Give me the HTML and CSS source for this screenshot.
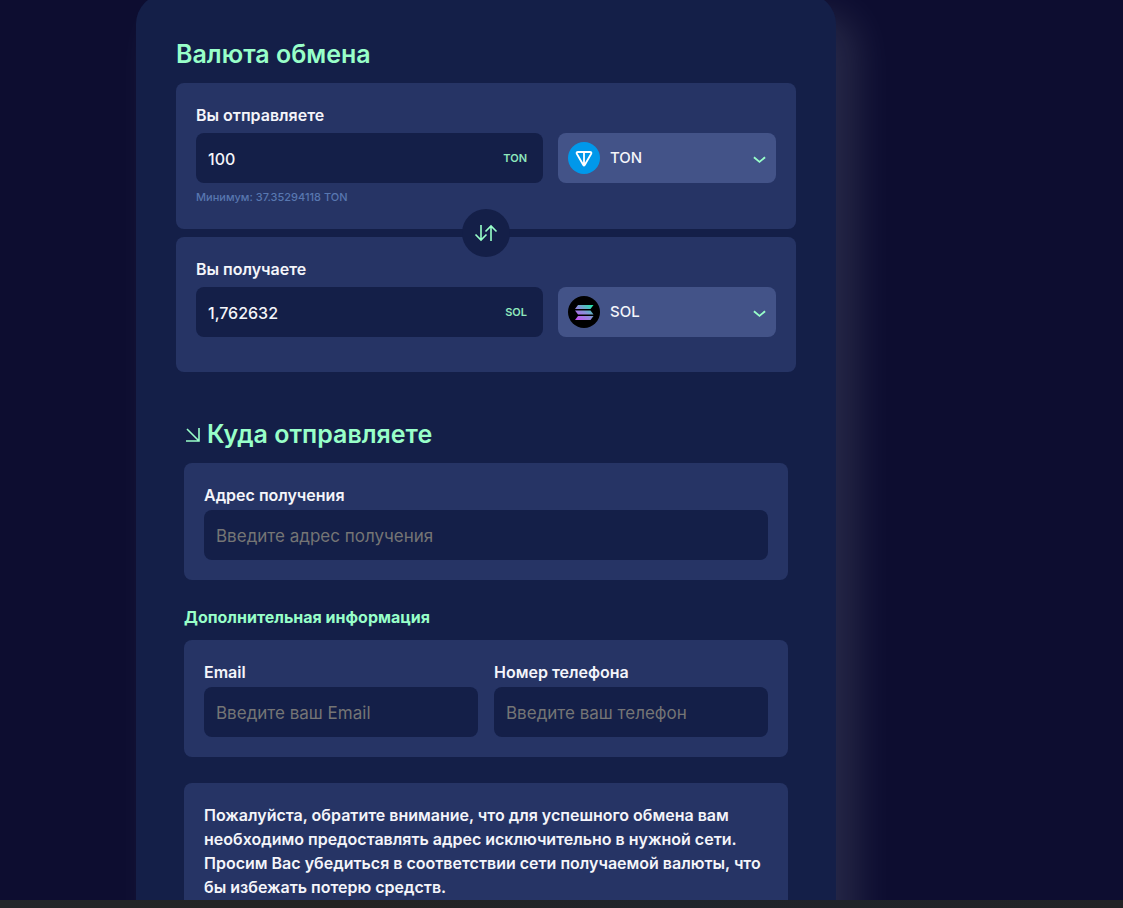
FILE: index.html
```
<!DOCTYPE html>
<html lang="ru">
<head>
    <meta charset="UTF-8">
    <meta name="viewport" content="width=device-width, initial-scale=1.0">
    <title>Обмен валюты</title>
    <link rel="stylesheet" href="styles.css">
</head>
<body>
    <main class="page">
        <form class="exchange">
            <section class="currency">
                <h2 class="title">Валюта обмена</h2>
                <div class="pair">
                    <div class="panel panel-send">
                        <label class="label" for="sendAmount">Вы отправляете</label>
                        <div class="row">
                            <div class="amount">
                                <input class="amount-input" type="text" id="sendAmount" value="100">
                                <span class="unit">TON</span>
                            </div>
                            <button class="coin" type="button">
                                <svg class="coin-icon" viewBox="0 0 32 32">
                                    <circle cx="16" cy="16" r="16" fill="#0098ea"/>
                                    <path d="M10 10h12q2 0 1.200 1.800L16.700 23q-.7 1-1.400 0L8.800 11.800Q8 10 10 10zM16 10v13" fill="none" stroke="#fff" stroke-width="1.800" stroke-linejoin="round"/>
                                </svg>
                                <span class="coin-name">TON</span>
                                <svg class="chevron" viewBox="0 0 14 8"><path d="M1 1l6 5 6-5"/></svg>
                            </button>
                        </div>
                        <p class="hint">Минимум: 37.35294118 TON</p>
                    </div>
                    <button class="swap" type="button" aria-label="Поменять местами">
                        <svg viewBox="0 0 24 18"><path d="M7 1v15M1.500 10.500L7 16l5.500-5.500M17 17V2M11.500 7.500L17 2l5.500 5.500"/></svg>
                    </button>
                    <div class="panel panel-get">
                        <label class="label" for="getAmount">Вы получаете</label>
                        <div class="row">
                            <div class="amount">
                                <input class="amount-input" type="text" id="getAmount" value="1,762632">
                                <span class="unit">SOL</span>
                            </div>
                            <button class="coin" type="button">
                                <svg class="coin-icon" viewBox="0 0 32 32">
                                    <defs>
                                        <linearGradient id="sol" gradientUnits="userSpaceOnUse" x1="9" y1="25" x2="23" y2="7">
                                            <stop offset="0" stop-color="#c94ff5"/>
                                            <stop offset=".5" stop-color="#8a8fd8"/>
                                            <stop offset="1" stop-color="#19f0a5"/>
                                        </linearGradient>
                                    </defs>
                                    <circle cx="16" cy="16" r="16"/>
                                    <path d="M10 9h15.500l-3 4H7zM7 14.500h15.500l3 4H10zM10 20h15.500l-3 4H7z" fill="url(#sol)"/>
                                </svg>
                                <span class="coin-name">SOL</span>
                                <svg class="chevron" viewBox="0 0 14 8"><path d="M1 1l6 5 6-5"/></svg>
                            </button>
                        </div>
                    </div>
                </div>
            </section>

            <section class="details">
                <h2 class="title">
                    <svg class="title-icon" viewBox="0 0 16 16"><path d="M2 2l12 12M14 1v13H1"/></svg>
                    Куда отправляете
                </h2>
                <div class="panel">
                    <label class="label" for="address">Адрес получения</label>
                    <input class="field" type="text" id="address" placeholder="Введите адрес получения">
                </div>

                <h3 class="subtitle">Дополнительная информация</h3>
                <div class="panel contacts">
                    <div>
                        <label class="label" for="email">Email</label>
                        <input class="field" type="email" id="email" placeholder="Введите ваш Email">
                    </div>
                    <div>
                        <label class="label" for="phone">Номер телефона</label>
                        <input class="field" type="tel" id="phone" placeholder="Введите ваш телефон">
                    </div>
                </div>

                <div class="panel notice">
                    <p>Пожалуйста, обратите внимание, что для успешного обмена вам<br>
                    необходимо предоставлять адрес исключительно в нужной сети.<br>
                    Просим Вас убедиться в соответствии сети получаемой валюты, что<br>
                    бы избежать потерю средств.</p>
                </div>
            </section>
        </form>
    </main>
    <footer class="bottom-bar"></footer>
</body>
</html>
```
FILE: styles.css
```
* {
    box-sizing: border-box;
}
body {
    margin: 0;
    height: 100vh;
    display: flex;
    flex-direction: column;
    background: #0d0d30;
    color: #f4f5fa;
    font-family: Inter, "Noto Sans", sans-serif;
    font-size: 16px;
    font-weight: 600;
    line-height: 24px;
}
h2, h3, p {
    margin: 0;
}
input, button {
    font: inherit;
    color: inherit;
    border: none;
}
button {
    cursor: pointer;
}
svg {
    flex: none;
}
.page {
    flex: 1;
    min-height: 0;
    overflow: hidden;
    padding: 0 24px 0 136px;
}
.exchange {
    max-width: 700px;
    margin-top: -6px;
    padding: 40px;
    border-radius: 30px;
    background: #141f48;
    box-shadow: 20px 20px 40px rgba(240, 255, 255, 0.12);
}
.title {
    display: flex;
    align-items: center;
    gap: 6px;
    margin-bottom: 8px;
    color: #98ffc9;
    font-size: 25px;
    font-weight: 600;
    line-height: 41px;
}
.title-icon {
    width: 16px;
    height: 16px;
    margin-left: 1px;
}
.panel {
    padding: 20px;
    border-radius: 8px;
    background: #263465;
}
.pair {
    display: flex;
    flex-direction: column;
    gap: 8px;
    position: relative;
}
.panel-send {
    min-height: 146px;
}
.panel-get {
    min-height: 135px;
}
.label {
    display: block;
    margin-bottom: 3px;
}
.pair .label {
    margin-bottom: 6px;
}
.row {
    display: flex;
    gap: 15px;
}
.amount {
    flex: 1;
    min-width: 0;
    display: flex;
    align-items: center;
    padding: 0 16px 0 12px;
    height: 50px;
    border-radius: 8px;
    background: #141f48;
}
.amount-input {
    flex: 1;
    min-width: 0;
    padding: 2px 0 0;
    background: transparent;
    outline: none;
    font-weight: 500;
}
.unit {
    color: #8fe8bd;
    font-size: 11px;
}
.coin {
    width: 218px;
    height: 50px;
    display: flex;
    align-items: center;
    gap: 10px;
    padding: 0 10px;
    border-radius: 8px;
    background: #435388;
    font-size: 15px;
    font-weight: 500;
    text-align: left;
}
.coin-icon {
    width: 32px;
    height: 32px;
}
.coin-name {
    flex: 1;
}
.chevron {
    width: 13px;
    height: 8px;
    margin-top: 4px;
}
.chevron path, .swap path, .title-icon path {
    fill: none;
    stroke: #98ffc9;
    stroke-width: 2;
}
.swap path, .title-icon path {
    stroke-width: 1.6;
}
.hint {
    margin-top: 4px;
    color: #5877b0;
    font-size: 11px;
    font-weight: 500;
    line-height: 20px;
}
.swap {
    position: absolute;
    top: 126px;
    left: 50%;
    margin-left: -24px;
    width: 48px;
    height: 48px;
    display: flex;
    align-items: center;
    justify-content: center;
    padding: 0;
    border-radius: 50%;
    background: #141f48;
}
.swap svg {
    width: 24px;
    height: 18px;
}
.details {
    padding: 42px 8px 0;
}
.field {
    display: block;
    width: 100%;
    height: 50px;
    padding: 2px 12px 0;
    border-radius: 8px;
    background: #141f48;
    outline: none;
    font-size: 17px;
    font-weight: 400;
}
.field::placeholder {
    color: #757575;
}
.subtitle {
    margin: 25px 0 11px;
    color: #98ffc9;
    font-size: 16px;
    font-weight: 700;
}
.contacts {
    display: grid;
    grid-template-columns: 1fr 1fr;
    gap: 16px;
}
.notice {
    margin-top: 26px;
}
.notice p {
    white-space: nowrap;
}
.bottom-bar {
    flex: none;
    height: 8px;
    background: linear-gradient(90deg, #24262a, #242322 30%, #1f242b 60%, #222326);
}
```
